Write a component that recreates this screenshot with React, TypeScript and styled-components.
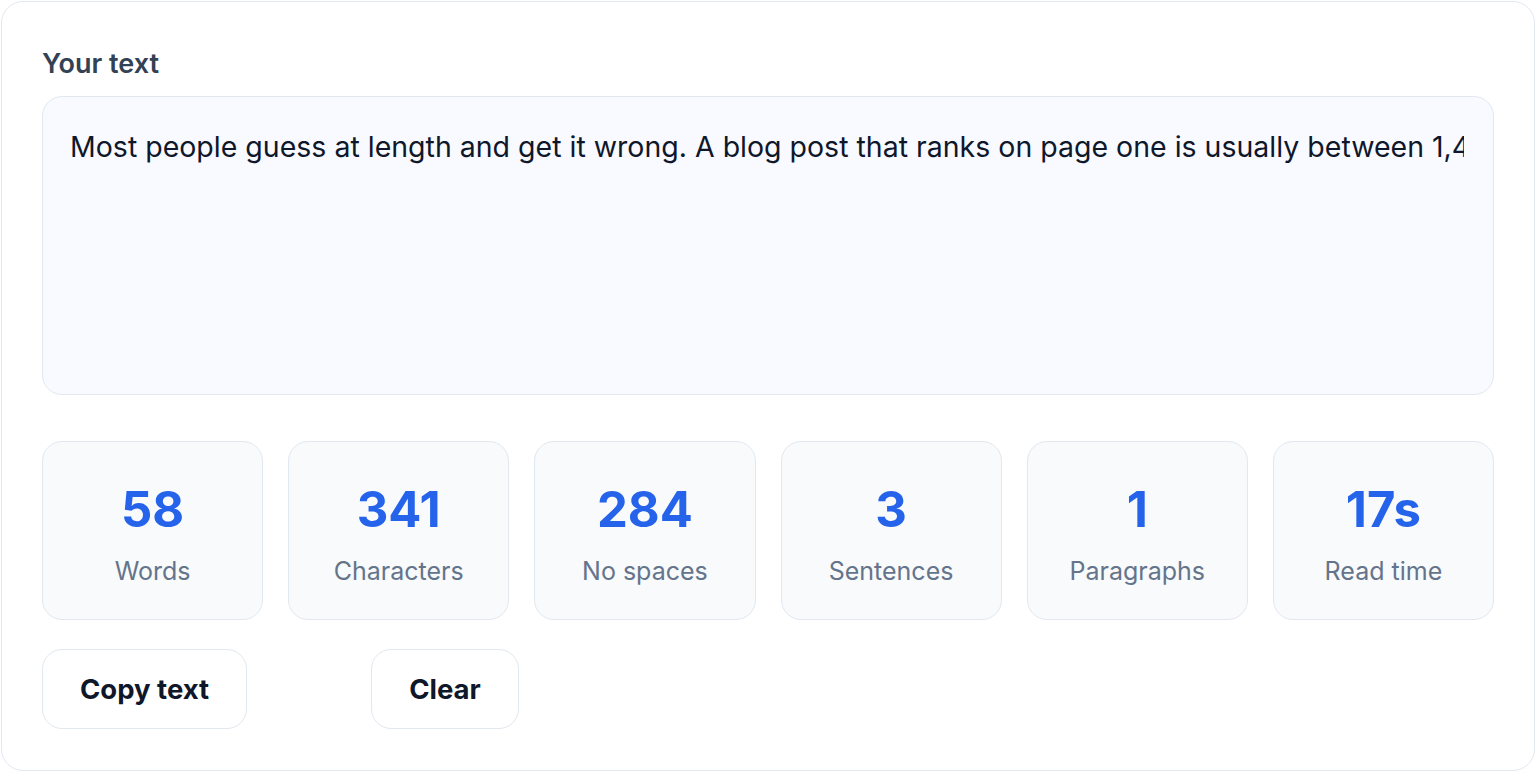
import { useState } from "react";
import styled, { createGlobalStyle } from "styled-components";

const GlobalStyle = createGlobalStyle`
  * { box-sizing: border-box; }
  body {
    margin: 0;
    background: #ffffff;
    font-family: Inter, "Noto Sans", "Liberation Sans", sans-serif;
  }
`;

const Page = styled.div`
  padding: 1px;
`;

const Card = styled.section`
  width: 1534px;
  height: 770px;
  border: 1px solid #e2e8f0;
  border-radius: 22px;
  background: #ffffff;
  padding: 40px;
  display: flex;
  flex-direction: column;
`;

const Label = styled.label`
  font-size: 27px;
  font-weight: 600;
  line-height: 36px;
  color: #334155;
  margin-top: 4px;
  margin-bottom: 14px;
`;

// the box clips the text at its padding, like the field in the reference
const Field = styled.div`
  height: 299px;
  border: 1px solid #e2e8f0;
  border-radius: 20px;
  background: #f8faff;
  padding: 29px 29px 27px 27px;
  overflow: hidden;
`;

const TextArea = styled.textarea`
  display: block;
  width: 100%;
  height: 100%;
  resize: none;
  overflow: hidden;
  white-space: pre;
  border: none;
  background: transparent;
  padding: 0;
  font-family: inherit;
  font-size: 28.5px;
  line-height: 1.5;
  color: #0f172a;
  outline: none;
`;

const StatsGrid = styled.div`
  display: grid;
  grid-template-columns: repeat(6, 1fr);
  gap: 25px;
  margin-top: 46px;
`;

const StatCard = styled.div`
  height: 179px;
  border: 1px solid #e2e8f0;
  border-radius: 20px;
  background: #f8fafc;
  padding-top: 38px;
  display: flex;
  flex-direction: column;
  align-items: center;
`;

const StatValue = styled.div`
  font-size: 49px;
  font-weight: 700;
  line-height: 59px;
  color: #2563eb;
`;

const StatName = styled.div`
  margin-top: 14px;
  font-size: 25px;
  line-height: 37px;
  color: #64748b;
`;

const Actions = styled.div`
  display: flex;
  gap: 124px;
  margin-top: 29px;
`;

const Button = styled.button`
  height: 80px;
  padding: 0 37px;
  border: 1px solid #e2e8f0;
  border-radius: 20px;
  background: #ffffff;
  font-family: inherit;
  font-size: 27.5px;
  font-weight: 700;
  color: #0f172a;
  cursor: pointer;
`;

const initialText =
  "Most people guess at length and get it wrong. A blog post that ranks on page one is usually between 1,400 and 2,100 words, while a product description works best well under 300. Paste your draft here and the counter updates as you type, so you can trim or expand it before you hit publish and see exactly where it lands.";

const stats = [
  { value: "58", name: "Words" },
  { value: "341", name: "Characters" },
  { value: "284", name: "No spaces" },
  { value: "3", name: "Sentences" },
  { value: "1", name: "Paragraphs" },
  { value: "17s", name: "Read time" },
];

export default function App() {
  const [text, setText] = useState(initialText);

  return (
    <Page>
      <GlobalStyle />
      <Card>
        <Label htmlFor="text">Your text</Label>
        <Field>
          <TextArea
            id="text"
            wrap="off"
            value={text}
            onChange={(e) => setText(e.target.value)}
          />
        </Field>
        <StatsGrid>
          {stats.map((s) => (
            <StatCard key={s.name}>
              <StatValue>{s.value}</StatValue>
              <StatName>{s.name}</StatName>
            </StatCard>
          ))}
        </StatsGrid>
        <Actions>
          <Button onClick={() => navigator.clipboard?.writeText(text)}>Copy text</Button>
          <Button onClick={() => setText("")}>Clear</Button>
        </Actions>
      </Card>
    </Page>
  );
}
